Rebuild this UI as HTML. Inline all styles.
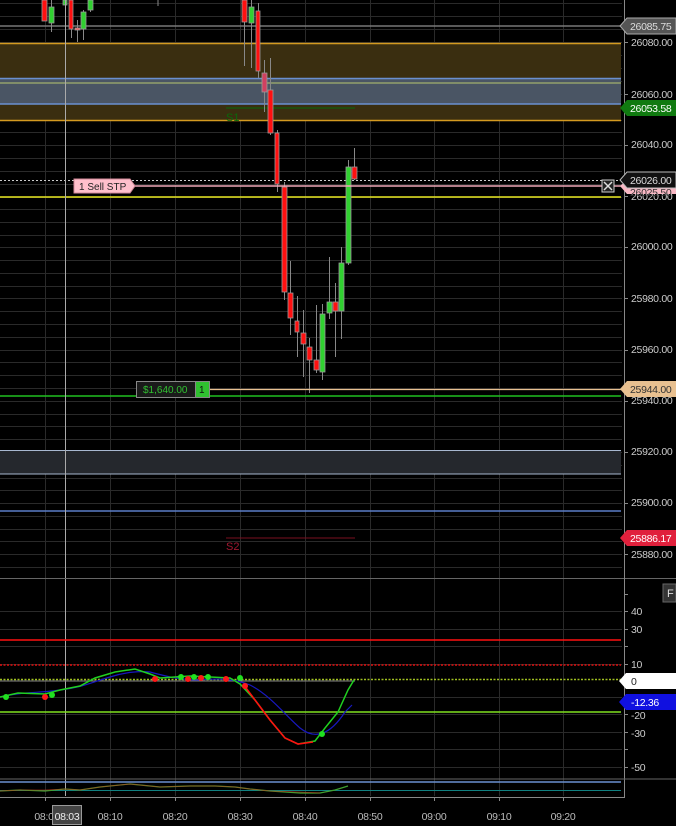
<!DOCTYPE html>
<html><head><meta charset="utf-8"><style>
html,body{margin:0;padding:0;background:#000;width:676px;height:826px;overflow:hidden}
svg{display:block;font-family:"Liberation Sans",sans-serif}
.ax{font-size:10.5px;letter-spacing:-0.3px}
</style></head><body>
<svg width="676" height="826" viewBox="0 0 676 826" xmlns="http://www.w3.org/2000/svg">
<rect width="676" height="826" fill="#000"/>
<g stroke="#2a2a2a" stroke-width="1">
<path d="M0 3.5H622M0 16.5H622M0 29.5H622M0 42.5H622M0 55.5H622M0 68.5H622M0 81.5H622M0 94.5H622M0 107.5H622M0 120.5H622M0 132.5H622M0 145.5H622M0 158.5H622M0 171.5H622M0 184.5H622M0 197.5H622M0 209.5H622M0 222.5H622M0 235.5H622M0 247.5H622M0 260.5H622M0 273.5H622M0 286.5H622M0 298.5H622M0 311.5H622M0 324.5H622M0 337.5H622M0 350.5H622M0 362.5H622M0 375.5H622M0 388.5H622M0 401.5H622M0 414.5H622M0 426.5H622M0 439.5H622M0 452.5H622M0 465.5H622M0 478.5H622M0 490.5H622M0 503.5H622M0 516.5H622M0 529.5H622M0 541.5H622M0 554.5H622M0 567.5H622"/>
<path d="M0 611.5H622M0 629.5H622M0 646.5H622M0 664.5H622M0 697.5H622M0 714.5H622M0 732.5H622M0 749.5H622M0 767.5H622"/>
<path d="M45.5 0V796M110.5 0V796M175.5 0V796M240.5 0V796M305.5 0V796M370.5 0V796M434.5 0V796M499.5 0V796M563.5 0V796"/>
</g>
<rect x="0" y="43" width="621" height="78" fill="#3a2e10"/>
<rect x="0" y="78" width="621" height="26" fill="#4a5564"/>
<line x1="0" y1="43.5" x2="621" y2="43.5" stroke="#d49a20" stroke-width="1.5"/>
<line x1="0" y1="120.5" x2="621" y2="120.5" stroke="#d49a20" stroke-width="1.5"/>
<line x1="0" y1="78.5" x2="621" y2="78.5" stroke="#6a90d0" stroke-width="1.5"/>
<line x1="0" y1="83" x2="621" y2="83" stroke="#b8c870" stroke-width="1"/>
<line x1="0" y1="104" x2="621" y2="104" stroke="#6a90d0" stroke-width="1.5"/>
<line x1="0" y1="26" x2="621" y2="26" stroke="#777" stroke-width="1.5"/>
<line x1="226" y1="108" x2="355" y2="108" stroke="#0a6a0a"/>
<text x="226" y="121" fill="#0a6a0a" font-size="11">S1</text>
<rect x="0" y="450" width="621" height="24" fill="#25282d"/>
<line x1="0" y1="450.5" x2="621" y2="450.5" stroke="#a8b8d0"/>
<line x1="0" y1="474" x2="621" y2="474" stroke="#a8b8d0"/>
<line x1="0" y1="511" x2="621" y2="511" stroke="#5a7ec8" stroke-width="1.5"/>
<line x1="226" y1="538" x2="355" y2="538" stroke="#7a1020"/>
<text x="226" y="550" fill="#a01830" font-size="11">S2</text>
<line x1="0" y1="180.5" x2="622" y2="180.5" stroke="#ccc" stroke-dasharray="2,2"/>
<line x1="0" y1="197" x2="621" y2="197" stroke="#e8e820" stroke-width="1.5"/>
<line x1="0" y1="396" x2="621" y2="396" stroke="#20c020" stroke-width="1.5"/>
<g stroke="#888" stroke-width="1">
<path d="M44.5 0V20M51.5 0V32M65.5 0V20M71.5 0V38M77.5 20V42M83.5 10V40M90.5 0V12M158 0V6"/>
<path d="M244.5 0V66M251.5 0V68M258.5 3V78M264.5 60V112M270.5 58V135M277.5 130V192M284.5 182V300M290.5 261V335M297.5 296V357M303.5 310V377M309.5 338V393M316.5 305V373M322.5 304V380M329.5 257V319M335.5 283V357M341.5 247V339M348.5 160V265M354.5 148V180"/>
</g>
<g stroke="#999" stroke-width="0.8">
<rect x="42" y="0" width="5" height="21" fill="#ff1010"/>
<rect x="49" y="7" width="5" height="16" fill="#30d030"/>
<rect x="63" y="0" width="4" height="5" fill="#30d030"/>
<rect x="69" y="0" width="4" height="29" fill="#ff1010"/>
<rect x="75" y="28" width="5" height="2" fill="#ff6060"/>
<rect x="81" y="12" width="5" height="17" fill="#30d030"/>
<rect x="88" y="0" width="5" height="10" fill="#30d030"/>
<rect x="242" y="0" width="5" height="22" fill="#ff1010"/>
<rect x="249" y="7" width="5" height="16" fill="#30d030"/>
<rect x="256" y="11" width="4" height="60" fill="#ff1010"/>
<rect x="262" y="73" width="5" height="19" fill="#d04060"/>
<rect x="268" y="90" width="5" height="43" fill="#ff1010"/>
<rect x="275" y="133" width="4" height="51" fill="#ff1010"/>
<rect x="282" y="187" width="5" height="105" fill="#ff1010"/>
<rect x="288" y="293" width="5" height="25" fill="#ff1010"/>
<rect x="295" y="321" width="4" height="11" fill="#ff1010"/>
<rect x="301" y="333" width="5" height="11" fill="#ff1010"/>
<rect x="307" y="347" width="5" height="13" fill="#ff1010"/>
<rect x="314" y="360" width="5" height="10" fill="#ff1010"/>
<rect x="320" y="314" width="5" height="58" fill="#30d030"/>
<rect x="327" y="302" width="5" height="11" fill="#30d030"/>
<rect x="333" y="302" width="5" height="9" fill="#ff1010"/>
<rect x="339" y="263" width="5" height="48" fill="#30d030"/>
<rect x="346" y="167" width="5" height="96" fill="#30d030"/>
<rect x="352" y="167" width="5" height="12" fill="#ff1010"/>
</g>
<line x1="76" y1="186" x2="622" y2="186" stroke="#f0a8b8" stroke-width="1.5"/>
<path d="M74 179H130L135 186L130 193H74Z" fill="#ffc0cc" stroke="#d08898"/>
<text x="79" y="190" fill="#222" font-size="10">1  Sell STP</text>
<rect x="602" y="180" width="12" height="12" fill="#222" stroke="#ccc"/>
<path d="M604 182L612 190M612 182L604 190" stroke="#ddd" stroke-width="1.5"/>
<line x1="200" y1="389.5" x2="622" y2="389.5" stroke="#e8c090" stroke-width="1.2"/>
<rect x="136.5" y="381.5" width="59" height="16" fill="#1a1a1a" stroke="#888"/>
<text x="143" y="393" fill="#30c030" font-size="10">$1,640.00</text>
<rect x="195.5" y="381.5" width="14" height="16" fill="#30c030" stroke="#888"/>
<text x="199" y="393" fill="#111" font-size="10">1</text>
<line x1="65.5" y1="0" x2="65.5" y2="796" stroke="#aaa" stroke-width="1"/>
<line x1="0" y1="578.5" x2="676" y2="578.5" stroke="#666"/>
<line x1="624.5" y1="0" x2="624.5" y2="798" stroke="#888"/>
<g fill="#ccc" class="ax">
<text x="631" y="46">26080.00</text>
<text x="631" y="98">26060.00</text>
<text x="631" y="148">26040.00</text>
<text x="631" y="200">26020.00</text>
<text x="631" y="250">26000.00</text>
<text x="631" y="302">25980.00</text>
<text x="631" y="353">25960.00</text>
<text x="631" y="404">25940.00</text>
<text x="631" y="455">25920.00</text>
<text x="631" y="506">25900.00</text>
<text x="631" y="558">25880.00</text>
</g>
<g stroke="#888"><path d="M624 42.5H628M624 94.5H628M624 145.5H628M624 196.5H628M624 247.5H628M624 298.5H628M624 350.5H628M624 401.5H628M624 452.5H628M624 503.5H628M624 554.5H628"/></g>
<path d="M620 26L627 18H676V34H627Z" fill="#555" stroke="#aaa"/>
<text x="630" y="30" fill="#ddd" class="ax">26085.75</text>
<path d="M620 108L627 100H676V116H627Z" fill="#107a10"/>
<text x="630" y="112" fill="#fff" class="ax">26053.58</text>
<path d="M620 186L627 180H676V194H627Z" fill="#f8b8c4"/>
<text x="630" y="196" fill="#333" class="ax">26025.50</text>
<path d="M620 180L627 172H676V188H627Z" fill="#111" stroke="#bbb"/>
<text x="630" y="184" fill="#ddd" class="ax">26026.00</text>
<path d="M620 389L627 381H676V397H627Z" fill="#e8c090"/>
<text x="630" y="393" fill="#333" class="ax">25944.00</text>
<path d="M620 538L627 530H676V546H627Z" fill="#e0203c"/>
<text x="630" y="542" fill="#fff" class="ax">25886.17</text>
<line x1="0" y1="640" x2="621" y2="640" stroke="#ff1010" stroke-width="1.5"/>
<line x1="0" y1="665" x2="621" y2="665" stroke="#e01010" stroke-width="1.5" stroke-dasharray="2,1.5"/>
<line x1="0" y1="679.5" x2="621" y2="679.5" stroke="#a0c020" stroke-width="1.5" stroke-dasharray="2,1.5"/>
<line x1="0" y1="681" x2="355" y2="681" stroke="#888"/>
<line x1="0" y1="712" x2="621" y2="712" stroke="#80e020" stroke-width="1.5"/>
<path d="M0 697C20 692 40 693 60 690C80 688 90 683 110 677C125 672 140 671 150 672C165 676 180 680 200 680C220 678 235 679 250 685C270 695 285 715 300 728C315 740 330 735 345 712L352 705" fill="none" stroke="#1818c0" stroke-width="1.2"/>
<path d="M0 697L18 693L45 694L60 690L80 686L95 678L115 672L135 669L150 674L160 678L175 677L190 676L210 677L230 678L240 684L255 700L270 720L285 738L298 744L315 741L325 728L338 712L348 690L354 680" fill="none" stroke="#20d020" stroke-width="1.5"/>
<path d="M243 684L255 700L270 720L285 738L298 744L313 742" fill="none" stroke="#ff1010" stroke-width="1.6"/>
<g fill="#20e020"><circle cx="6" cy="697" r="3"/><circle cx="52" cy="695" r="3"/><circle cx="181" cy="677" r="3"/><circle cx="194" cy="677" r="3"/><circle cx="208" cy="677" r="3"/><circle cx="240" cy="678" r="3"/><circle cx="322" cy="734" r="3"/></g>
<g fill="#ff1818"><circle cx="45" cy="697" r="3"/><circle cx="155" cy="679" r="3"/><circle cx="188" cy="679" r="3"/><circle cx="201" cy="678" r="3"/><circle cx="226" cy="679" r="3"/><circle cx="245" cy="686" r="3"/></g>
<g fill="#ccc" class="ax">
<text x="631" y="615">40</text><text x="631" y="633">30</text><text x="631" y="668">10</text>
<text x="631" y="719">-20</text><text x="631" y="737">-30</text><text x="631" y="771">-50</text>
</g>
<g stroke="#888"><path d="M624 594.5H628M624 611.5H628M624 629.5H628M624 646.5H628M624 664.5H628M624 714.5H628M624 732.5H628M624 749.5H628M624 767.5H628"/></g>
<rect x="663" y="584" width="13" height="18" fill="#333" stroke="#666"/>
<text x="667" y="597" fill="#ddd" font-size="11">F</text>
<path d="M619 681L626 673H676V689H626Z" fill="#fff"/>
<text x="631" y="685" fill="#222" class="ax">0</text>
<path d="M619 702L626 694H676V710H626Z" fill="#1010e0"/>
<text x="631" y="706" fill="#fff" class="ax">-12.36</text>
<line x1="0" y1="779" x2="676" y2="779" stroke="#666"/>
<line x1="0" y1="782" x2="621" y2="782" stroke="#6a90d0" stroke-width="1.5"/>
<line x1="0" y1="790.5" x2="621" y2="790.5" stroke="#108080"/>
<path d="M0 791L20 790L45 791L65 789L80 790L100 787L130 784L160 787L190 786L215 786L235 787L250 789L270 791L300 793L320 793L335 790L348 786" fill="none" stroke="#40a030" stroke-width="1.2"/>
<path d="M0 791L20 790L45 790L65 789L80 790L100 787L130 784L160 787L190 786L215 786L235 787L250 789L270 791L300 792L320 793" fill="none" stroke="#c03020" stroke-width="0.8" opacity="0.7"/>
<line x1="0" y1="797.5" x2="624" y2="797.5" stroke="#888"/>
<g stroke="#888"><path d="M45.5 797V801M110.5 797V801M175.5 797V801M240.5 797V801M305.5 797V801M370.5 797V801M434.5 797V801M499.5 797V801M563.5 797V801"/></g>
<g fill="#bbb" class="ax" text-anchor="middle">
<text x="44" y="820">08:0</text>
<text x="110" y="820">08:10</text><text x="175" y="820">08:20</text><text x="240" y="820">08:30</text>
<text x="305" y="820">08:40</text><text x="370" y="820">08:50</text><text x="434" y="820">09:00</text>
<text x="499" y="820">09:10</text><text x="563" y="820">09:20</text>
</g>
<rect x="52.5" y="805.5" width="29" height="19" fill="#444" stroke="#999"/>
<text x="67" y="820" fill="#eee" class="ax" text-anchor="middle">08:03</text>
</svg>
</body></html>
